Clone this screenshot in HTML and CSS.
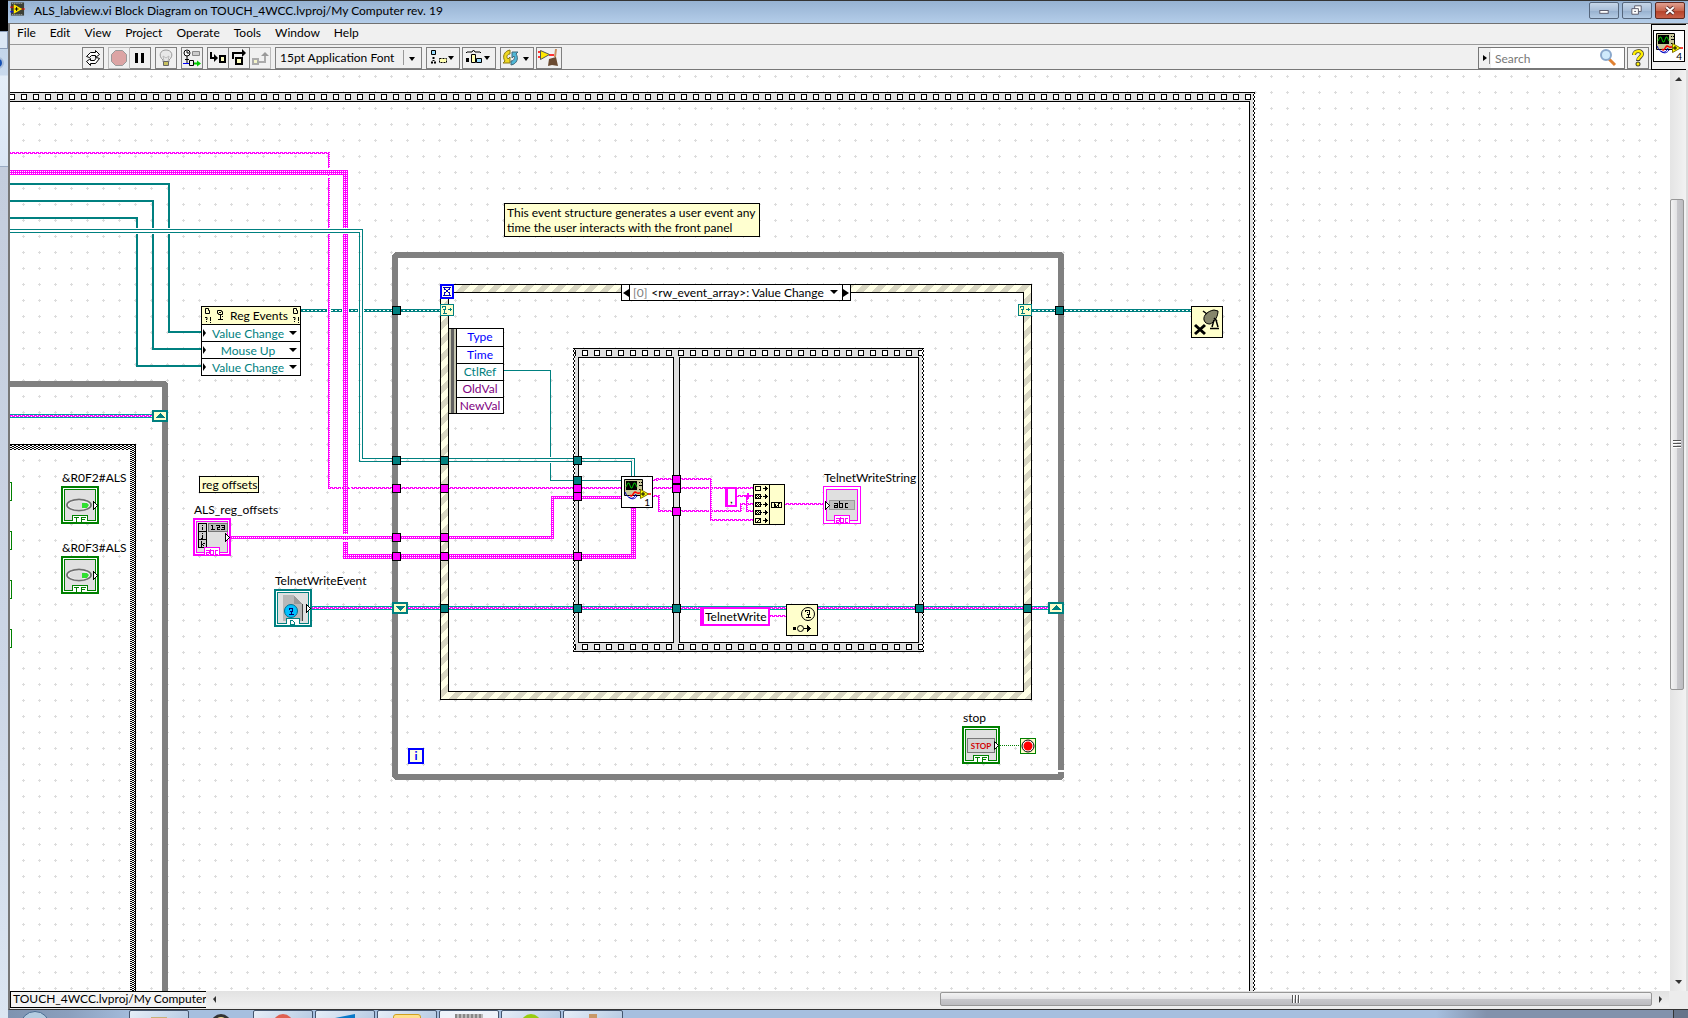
FILE: index.html
```html
<!DOCTYPE html>
<html lang="en">
<head>
    <meta charset="UTF-8" />
    <meta name="viewport" content="width=device-width, initial-scale=1" />
    <title>ALS_labview.vi Block Diagram</title>
    <link rel="stylesheet" href="styles.css">
</head>
<body>

<!-- shared symbols -->
<svg class="defs" width="0" height="0">
    <defs>
        <symbol id="vi-icon" viewBox="0 0 32 32">
            <rect x="0.5" y="0.5" width="31" height="31" fill="#fff" stroke="#000"/>
            <path d="M3.500 3.500h18v16h-18z" fill="#c8c89c" stroke="#000"/>
            <path d="M5 5h11v9H5z" fill="#000"/>
            <path d="M5 11l2-4h1l2 5h1l2-5h1l2 4" fill="none" stroke="#00c000"/>
            <path d="M18 6.500h1M20 6.500h1M18 9.500h3M18 13.500h2" stroke="#000"/>
            <path d="M4 16c3 7 8 9 11 2M8 21c3 3 6 2 8-1" fill="none" stroke="#0000c0"/>
            <path d="M9 19c2 3 3-2 5-3 2 0 2 2 4 1h3M27 18h3" fill="none" stroke="#f00" stroke-width="1.5"/>
            <path d="M19.500 13.500l8 4.500-8 4.500z" fill="#ffff00" stroke="#807000"/>
            <path d="M20 18h4M22 16v4" stroke="#000"/>
        </symbol>
        <symbol id="antenna" viewBox="0 0 10 12">
            <path d="M2.500 1.500h4v1h1v3h-4v-1h-1zM4 3.500h2M5.500 6v4M3 10.500h5M7 7.500h1" fill="none" stroke="currentColor"/>
        </symbol>
        <symbol id="wire-arrow" viewBox="0 0 6 9">
            <path d="M0.500 0.500v8l4-4z" fill="#fff" stroke="#000"/>
        </symbol>
        <symbol id="bool-terminal" viewBox="0 0 38 38">
            <rect x="1" y="1" width="36" height="36" fill="#fff" stroke="#008000" stroke-width="2"/>
            <rect x="3.500" y="3.500" width="31" height="31" fill="#e0e0e0" stroke="#008000"/>
            <rect x="11" y="29" width="16" height="7" fill="#fff"/>
            <path d="M11.500 35v-5.500h15v5.500M13 31.500h5M15.500 31.500v4M20.500 35.500v-4h4M20.500 33.500h3" fill="none" stroke="#008000"/>
        </symbol>
        <symbol id="led" viewBox="0 0 30 14">
            <ellipse cx="14" cy="7" rx="13" ry="6.500" fill="#a8a8a8"/>
            <ellipse cx="14" cy="7" rx="12" ry="5.500" fill="#f0f0f0" stroke="#6c6c6c" stroke-width="1.500"/>
            <ellipse cx="13" cy="7" rx="9" ry="4" fill="#dedede"/>
            <path d="M17 5h5l2 2-2 3h-5z" fill="#30e030"/>
        </symbol>
        <symbol id="abc-tag" viewBox="0 0 16 8">
            <path d="M0.500 8V0.500h15V8" fill="#fff" stroke="#f0f"/>
            <path d="M2 3.500h3v3.500M5 5.500H2v1.500h3M6.500 1.500V7h3V3.500h-3M14 3.500h-3V7h3" fill="none" stroke="#f0f"/>
        </symbol>
    </defs>
</svg>

<aside class="behind">
    <div class="behind-top"></div>
    <div class="behind-tab"></div>
    <div class="behind-bar"><i></i></div>
    <div class="behind-page"></div>
</aside>

<main class="window">
    <header class="titlebar">
        <svg class="app-icon" viewBox="0 0 16 14">
            <rect x="1" y="0" width="14" height="14" fill="#3c4038"/>
            <path d="M2 1h12M2 13h12" stroke="#c8c8c8" stroke-dasharray="1 1"/>
            <path d="M0 5h4" stroke="#f00"/><path d="M0 10h4" stroke="#00f"/><path d="M12 7h4" stroke="#f00"/>
            <path d="M4 2l9 5-9 5z" fill="#ffe800"/>
            <path d="M5 7h4M7 5v4" stroke="#000"/>
        </svg>
        <h1>ALS_labview.vi Block Diagram on TOUCH_4WCC.lvproj/My Computer rev. 19</h1>
        <div class="window-buttons">
            <button aria-label="Minimize"><svg viewBox="0 0 30 15"><rect x="10.500" y="7.500" width="9" height="3" fill="#fff" stroke="#556"/></svg></button>
            <button aria-label="Restore"><svg viewBox="0 0 30 15"><path d="M12.500 2.500h7v6h-7z" fill="#fff" stroke="#556"/><path d="M9.500 5.500h7v6h-7z" fill="#fff" stroke="#556"/><path d="M12 8.500h2" stroke="#556"/></svg></button>
            <button class="close" aria-label="Close"><svg viewBox="0 0 30 15"><path d="M11 4l8 7M19 4l-8 7" stroke="#5a3030" stroke-width="4"/><path d="M11 4l8 7M19 4l-8 7" stroke="#fff" stroke-width="2"/></svg></button>
        </div>
    </header>

    <div class="chrome">
        <div class="bars">
            <nav class="menubar">
                <a href="#">File</a>
                <a href="#">Edit</a>
                <a href="#">View</a>
                <a href="#">Project</a>
                <a href="#">Operate</a>
                <a href="#">Tools</a>
                <a href="#">Window</a>
                <a href="#">Help</a>
            </nav>
            <div class="toolbar">
                <button class="tool" aria-label="Run continuously">
                    <svg viewBox="0 0 20 20"><g fill="#fff" stroke="#000"><path d="M3.500 8.500l4-4h5v-2l4 4-4 3v-2h-4l-2 2z"/><path d="M16.500 10.500l-4 5h-5v2l-4-4 4-3v2h4l2-3z"/></g></svg>
                </button>
                <div class="group">
                    <button class="tool" aria-label="Abort" disabled><svg viewBox="0 0 20 20"><path d="M6.500 2.500h7l4 4v7l-4 4h-7l-4-4v-7z" fill="#dca4a4" stroke="#999"/></svg></button>
                    <button class="tool" aria-label="Pause"><svg viewBox="0 0 20 20"><path d="M5 5h3v10H5zM11 5h3v10h-3z"/></svg></button>
                </div>
                <button class="tool" aria-label="Highlight execution">
                    <svg viewBox="0 0 20 20"><path d="M7 12c-5-4-3-10 3-10s8 6 3 10v2H7z" fill="#e8e8e8" stroke="#999"/><path d="M8 13l-1-5 3 2 3-2-1 5" fill="none" stroke="#bbb"/><path d="M7.500 13.500h5v4h-5z" fill="#c8c060" stroke="#666"/></svg>
                </button>
                <button class="tool" aria-label="Retain wire values">
                    <svg viewBox="0 0 20 20"><circle cx="5" cy="5" r="3" fill="#fff" stroke="#000"/><path d="M5 3v2h2M5 8v7M3 11.500h4" stroke="#000" fill="none"/><path d="M10.500 3.500h7v4h-7z" fill="#ccc" stroke="#888"/><path d="M1 15.500h6" stroke="#00f"/><path d="M7.500 12.500h4v5h-4z" fill="#eee" stroke="#000"/><path d="M12 14.500h3v-2l4 3-4 3v-2h-3z" fill="#0c0"/></svg>
                </button>
                <div class="group">
                    <button class="tool" aria-label="Step into"><svg viewBox="0 0 20 20"><path d="M3 4v6h4" fill="none" stroke="#000" stroke-width="2"/><path d="M6 6l4 4-4 4z"/><path d="M12 8h5v6h-5z" fill="#ffffc0" stroke="#000" stroke-width="2"/></svg></button>
                    <button class="tool" aria-label="Step over"><svg viewBox="0 0 20 20"><path d="M4 11V5h10" fill="none" stroke="#000" stroke-width="2"/><path d="M13 1l4 4-4 4z"/><path d="M7 10h6v6H7z" fill="#ffffc0" stroke="#000" stroke-width="2"/></svg></button>
                    <button class="tool" aria-label="Step out" disabled><svg viewBox="0 0 20 20"><path d="M3 11h5v5H3z" fill="#f4f4c8" stroke="#aaa" stroke-width="2"/><path d="M9 14h6V8" fill="none" stroke="#aaa" stroke-width="2"/><path d="M11 8l4-4 4 4z" fill="#999"/></svg></button>
                </div>
                <div class="font-box">
                    <select aria-label="Text settings"><option>15pt Application Font</option></select>
                </div>
                <div class="pair">
                    <button class="tool wide" aria-label="Align objects">
                        <svg viewBox="0 0 32 20"><path d="M4.500 2.500h4v4h-4z" fill="#9df" stroke="#000"/><path d="M6.500 9v4M4 14.500h6" stroke="#000" stroke-width="2" stroke-dasharray="2 1"/><path d="M12.500 10.500h7v4h-7z" fill="#ffffb0" stroke="#000" stroke-dasharray="2 1"/><path d="M21 8h6l-3 4z"/></svg>
                    </button>
                    <button class="tool wide" aria-label="Distribute objects">
                        <svg viewBox="0 0 32 20"><path d="M3 5l1-1h5l1.500-2 1.500 2h5l1 1" fill="none" stroke="#000"/><path d="M3 10h3v4H3z"/><path d="M8.500 6.500h4v8h-4z" fill="#ffffb0" stroke="#000"/><path d="M13.500 10.500h5v4h-5z" fill="#9df" stroke="#000"/><path d="M21 8h6l-3 4z"/></svg>
                    </button>
                </div>
                <div class="pair">
                    <button class="tool wide" aria-label="Reorder">
                        <svg viewBox="0 0 32 20"><path d="M9 2C3 3 1 9 4 13l-2 2h7V9l-2 2C5 9 6 6 9 6z" fill="#f0d820" stroke="#887818"/><path d="M10 17c6-1 8-7 5-11l2-2h-6v6l2-2c1 2 0 5-3 5z" fill="#50b8d8" stroke="#406878"/><path d="M22 9h6l-3 4z"/></svg>
                    </button>
                    <button class="tool cleanup" aria-label="Clean up diagram">
                        <svg viewBox="0 0 24 20"><path d="M1 4h4M1 9h4M12 7h5" stroke="#f33" stroke-width="2"/><path d="M3.500 2.500l9 4-9 5z" fill="#ffe800" stroke="#555"/><path d="M19 1l-1 8" stroke="#c89060" stroke-width="2"/><path d="M12 11l7-2 2 9-6-1-4 1z" fill="#6a4a30"/></svg>
                    </button>
                </div>
                <div class="pair right">
                    <div class="search">
                        <svg class="search-arrow" viewBox="0 0 12 20"><path d="M4 7l4 3-4 3z"/><path d="M10.500 4v12" stroke="#888"/></svg>
                        <input type="text" aria-label="Search" placeholder="Search">
                        <svg class="search-lens" viewBox="0 0 18 18"><path d="M10 10l6 6" stroke="#e08030" stroke-width="3"/><circle cx="7" cy="6" r="5" fill="#cfeafc" stroke="#8aa8cc" stroke-width="2"/></svg>
                    </div>
                    <button class="tool" aria-label="Context help">
                        <svg viewBox="0 0 20 20"><path d="M6 7c0-5 8-5 8-1 0 3-4 3-4 7" fill="none" stroke="#443" stroke-width="4"/><circle cx="10" cy="16" r="2.500" fill="#443"/><path d="M6 7c0-5 8-5 8-1 0 3-4 3-4 6" fill="none" stroke="#ffee00" stroke-width="2.500"/><circle cx="10" cy="16" r="1.500" fill="#fe0"/></svg>
                    </button>
                </div>
            </div>
        </div>
        <div class="connector">
            <div class="vi-badge"><svg viewBox="0 0 32 32"><use href="#vi-icon"/></svg><span>4</span></div>
        </div>
    </div>

    <div class="workspace">
        <div class="canvas">
            <div class="sheet">
                <svg class="wires" width="1700" height="1200" shape-rendering="crispEdges">
                    <defs>
                        <pattern id="grid" width="16" height="16" patternUnits="userSpaceOnUse">
                            <path d="M6 12h3v1H6zM7 11h1v3H7z" fill="#dcdcdc"/>
                        </pattern>
                        <pattern id="holes" x="9" y="4" width="12" height="6" patternUnits="userSpaceOnUse">
                            <rect x="0.500" y="0.500" width="5" height="5" fill="#fff" stroke="#000"/>
                        </pattern>
                        <pattern id="holes-inner" x="6" y="2" width="12" height="6" patternUnits="userSpaceOnUse">
                            <rect x="0.500" y="0.500" width="5" height="5" fill="#fff" stroke="#000"/>
                        </pattern>
                        <pattern id="stripe" width="16" height="16" patternUnits="userSpaceOnUse">
                            <rect width="16" height="16" fill="#ffffe6"/>
                            <path d="M0 11L11 0h5v3L3 16H0zM0 3V0h3z M11 16h5v-5z" fill="#d8d6c2"/>
                        </pattern>
                        <pattern id="checker" width="4" height="4" patternUnits="userSpaceOnUse">
                            <rect width="4" height="4" fill="#fff"/>
                            <path d="M0 0h2v1H0zM2 1h2v1H2zM0 2h2v1H0zM2 3h2v1H2z"/>
                        </pattern>
                        <pattern id="edge" width="2" height="4" patternUnits="userSpaceOnUse">
                            <rect width="2" height="4" fill="#fff"/>
                            <path d="M0 0h1v2H0zM1 2h1v2H1z"/>
                        </pattern>
                        <pattern id="string" width="4" height="2" patternUnits="userSpaceOnUse">
                            <rect width="4" height="2" fill="#f0f"/>
                            <path d="M3 0h1v1H3zM1 1h1v1H1z" fill="#fff"/>
                        </pattern>
                        <pattern id="array" width="2" height="2" patternUnits="userSpaceOnUse">
                            <rect width="2" height="2" fill="#f0f"/>
                            <path d="M0 1h1v1H0z" fill="#fff"/>
                        </pattern>
                        <g id="t"><rect x="0.500" y="0.500" width="8" height="8" fill="#008080" stroke="#000"/></g>
                        <g id="p"><rect x="0.500" y="0.500" width="8" height="8" fill="#f0f" stroke="#000"/></g>
                        <g id="dyn"><rect x="0.500" y="0.500" width="13" height="11" fill="#ffffcc" stroke="#008080"/><path d="M2 2.500h4M2.500 2v2M5.500 2v3M3 5.500h3M4.500 6v4M3 9.500h4M8 5.500h4M10.500 4v3" fill="none" stroke="#008080"/></g>
                    </defs>

                    <rect x="10" y="70" width="1690" height="1130" fill="url(#grid)"/>

                    <!-- outer flat sequence -->
                    <rect x="10" y="92" width="1245" height="10" fill="#e0e0e0"/>
                    <rect x="10" y="94" width="1245" height="6" fill="url(#holes)"/>
                    <path d="M10 92.500h1245M10 101.500h1240M1249.500 101v1100" stroke="#000"/>
                    <rect x="1250" y="101" width="4" height="1100" fill="#e0e0e0"/>
                    <rect x="1253" y="93" width="2" height="1110" fill="url(#edge)"/>

                    <!-- left loop and case -->
                    <path d="M10 384h155v820" fill="none" stroke="#808080" stroke-width="6" stroke-linejoin="bevel"/>
                    <path d="M10 444h126v760h-6V450H10z" fill="url(#checker)"/>
                    <path d="M10 444.500h125.500v760" fill="none" stroke="#000"/>
                    <path d="M10 482.500h1.500v18H10M10 531.500h1.500v18H10M10 580.500h1.500v18H10M10 629.500h1.500v18H10" fill="none" stroke="#008000"/>

                    <!-- while loop -->
                    <rect x="395" y="255" width="666" height="522" fill="none" stroke="#808080" stroke-width="6" stroke-linejoin="bevel"/>
                    <path d="M1057 771h8" stroke="#fff" stroke-width="2"/>

                    <!-- event structure -->
                    <path d="M440 284h592v416H440zM449 293v398h574V293z" fill="url(#stripe)" fill-rule="evenodd"/>
                    <rect x="440.500" y="284.500" width="591" height="415" fill="none" stroke="#000"/>
                    <rect x="448.500" y="292.500" width="575" height="399" fill="none" stroke="#000"/>

                    <!-- inner flat sequence -->
                    <path d="M573 348h351v304H573zM579 358v284h94V358zM680 358v284h238V358z" fill="#e0e0e0" fill-rule="evenodd"/>
                    <rect x="573" y="350" width="351" height="6" fill="url(#holes-inner)"/>
                    <rect x="573" y="644" width="351" height="6" fill="url(#holes-inner)"/>
                    <rect x="573" y="348" width="2" height="304" fill="url(#edge)"/>
                    <rect x="922" y="348" width="2" height="304" fill="url(#edge)"/>
                    <path d="M573 348.500h351M573 651.500h351M578.500 357.500h95v285h-95zM679.500 357.500h239v285h-239z" fill="none" stroke="#000"/>

                    <!-- teal references -->
                    <g fill="none" stroke="#008080">
                        <path d="M10 184h159v148h32M10 201h143v148h48M10 218h127v148h64" stroke-width="2"/>
                        <path d="M504 370.500h46.500v110H621"/>
                    </g>

                    <!-- string wires -->
                    <g fill="none" stroke="url(#string)" stroke-width="2">
                        <path d="M10 153h319v335h292"/>
                        <path d="M653 480h4v-1h54v41h42M653 488h100M653 496h6v15h82v-7h12M737 496h16M747 496v15h6M785 504h38M770 616h16"/>
                    </g>
                    <path d="M745 496h5M747.500 493v6" stroke="#f0f" stroke-width="2"/>
                    <path d="M709 488h1M713 488h1M709 511h1M713 511h1" stroke="#fff" stroke-width="3"/>
                    <path d="M327 169h4M327 177h4" stroke="#fff" stroke-width="2"/>

                    <path d="M230 537.500h322.500v-40H621" fill="none" stroke="url(#array)" stroke-width="3"/>
                    <path d="M341 485v6M350 485v6" stroke="#fff"/>
                    <path d="M10 172.500h335.500v384h288V508" fill="none" stroke="url(#array)" stroke-width="5"/>
                    <path d="M342 534.500h8M342 540.500h8" stroke="#fff" stroke-width="2"/>
                    <path d="M340 537.500h12" stroke="url(#array)" stroke-width="3"/>

                    <!-- reference array -->
                    <path d="M10 231h350M549 460h4" stroke="#fff" stroke-width="6"/>
                    <path d="M10 229.500h352.500v229H634.500V476M10 232.500h349.500v229H631.500V476" fill="none" stroke="#008080"/>

                    <!-- event registration refnum -->
                    <path d="M301 310.500h140M1032 310.500h159" stroke="#008080" stroke-width="3"/>
                    <path d="M303 310.500h138M1034 310.500h157" stroke="#fff" stroke-dasharray="2 2"/>
                    <path d="M327 310.500h4M342 310.500h7M358 310.500h6" stroke="#fff" stroke-width="5"/>
                    <path d="M329 307v7" stroke="url(#string)" stroke-width="2"/>
                    <path d="M345.500 307v7" stroke="url(#array)" stroke-width="5"/>
                    <path d="M359.500 307v7M362.500 307v7" stroke="#008080"/>

                    <!-- user event wires -->
                    <path d="M312 608h736M10 416h143" stroke="#00a0a0" stroke-width="4"/>
                    <path d="M312 608h736M10 416h143" stroke="url(#string)" stroke-width="2"/>

                    <!-- tunnels -->
                    <use href="#t" x="392" y="306"/><use href="#t" x="1055" y="306"/>
                    <use href="#t" x="392" y="456"/><use href="#t" x="440" y="456"/><use href="#t" x="573" y="456"/>
                    <use href="#t" x="573" y="476"/>
                    <use href="#p" x="392" y="484"/><use href="#p" x="440" y="484"/><use href="#p" x="573" y="484"/>
                    <use href="#p" x="573" y="492"/>
                    <use href="#p" x="392" y="533"/><use href="#p" x="440" y="533"/>
                    <use href="#p" x="392" y="552"/><use href="#p" x="440" y="552"/><use href="#p" x="573" y="552"/>
                    <use href="#p" x="672" y="475"/><use href="#p" x="672" y="484"/><use href="#p" x="672" y="507"/>
                    <use href="#t" x="440" y="604"/><use href="#t" x="573" y="604"/><use href="#t" x="672" y="604"/>
                    <use href="#t" x="915" y="604"/><use href="#t" x="1023" y="604"/>

                    <!-- shift registers -->
                    <g fill="#ffffcc" stroke="#008080" stroke-width="2">
                        <rect x="153" y="411" width="14" height="10"/>
                        <rect x="393" y="603" width="14" height="10"/>
                        <rect x="1049" y="603" width="14" height="10"/>
                    </g>
                    <path d="M155 418l5-5 5 5zM395 606l5 5 5-5zM1051 610l5-5 5 5z" fill="#008080"/>

                    <!-- timeout and dynamic terminals -->
                    <rect x="441" y="285" width="12" height="13" fill="#ffffe6" stroke="#00f" stroke-width="2"/>
                    <path d="M443 287.500h8M443 295.500h8M444.500 287v2l5 4v3M449.500 287v2l-5 4v3" fill="none" stroke="#0000c0"/>
                    <use href="#dyn" x="440" y="304"/><use href="#dyn" x="1018" y="304"/>

                    <!-- iteration and stop condition -->
                    <rect x="409" y="749" width="14" height="14" fill="#ffffe6" stroke="#00f" stroke-width="2"/>
                    <path d="M1000 745.500h20" stroke="#008000" stroke-dasharray="1 1"/>
                    <rect x="1020.500" y="738.500" width="15" height="15" fill="#ffffcc" stroke="#008000"/>
                    <g shape-rendering="auto"><circle cx="1028" cy="746" r="6" fill="#fff" stroke="#000"/><circle cx="1028" cy="746" r="4.500" fill="#f00"/></g>

                    <!-- boolean terminals -->
                    <svg x="61" y="486" width="38" height="38"><use href="#bool-terminal"/></svg>
                    <svg x="61" y="556" width="38" height="38"><use href="#bool-terminal"/></svg>
                    <svg x="962" y="726" width="38" height="38"><use href="#bool-terminal"/></svg>
                    <svg x="65" y="498" width="30" height="14" shape-rendering="auto"><use href="#led"/></svg>
                    <svg x="65" y="568" width="30" height="14" shape-rendering="auto"><use href="#led"/></svg>
                    <svg x="93" y="501" width="6" height="9"><use href="#wire-arrow"/></svg>
                    <svg x="93" y="571" width="6" height="9"><use href="#wire-arrow"/></svg>

                    <!-- ALS_reg_offsets -->
                    <rect x="194" y="519" width="36" height="36" fill="#fff" stroke="#f0f" stroke-width="2"/>
                    <rect x="196.500" y="521.500" width="31" height="31" fill="#e0e0e0" stroke="#f0f"/>
                    <path d="M198.500 523.500h8v24h-8zM198.500 531.500h8M198.500 539.500h8" fill="#ccc" stroke="#000"/>
                    <path d="M202.500 525v1M202.500 527v3M202.500 533v1M202.500 535v3h-2M201.500 541v6M204.500 543l-2 1.500 2 2" fill="none" stroke="#000"/>
                    <path d="M208.500 523.500h19v8h-19z" fill="#bbb" stroke="#777"/>
                    <path d="M211 525.500h1.500v4M211 529.500h4M216 525.500h3v2h-2v2h3M221 525.500h3v4h-3M222 527.500h2" fill="none" stroke="#000"/>
                    <svg x="204" y="547" width="16" height="8"><use href="#abc-tag"/></svg>
                    <svg x="225" y="533" width="6" height="9"><use href="#wire-arrow"/></svg>

                    <!-- TelnetWriteEvent -->
                    <rect x="275" y="590" width="36" height="36" fill="#fff" stroke="#008080" stroke-width="2"/>
                    <rect x="277.500" y="592.500" width="31" height="31" fill="#e0e0e0" stroke="#008080"/>
                    <path d="M283 595h11v9h9v17h-20z" fill="#b8b8b8"/>
                    <path d="M294 596l8 8h-8z" fill="#999"/><path d="M302.500 604v17" stroke="#444"/>
                    <circle cx="291" cy="611" r="6.500" fill="#00c0ff" stroke="#007090" shape-rendering="auto"/>
                    <path d="M289 608h4M289.500 608v2M292.500 608v3h-3M291.500 611v3M289 614.500h5" fill="none" stroke="#00006a"/>
                    <path d="M286 619h14v6h-14z" fill="#fff"/>
                    <path d="M286.500 624v-5.500h13v5.500M290.500 620.500h2l2 2v1.500h-4z" fill="none" stroke="#008080"/>
                    <svg x="306" y="604" width="6" height="9"><use href="#wire-arrow"/></svg>

                    <!-- TelnetWriteString -->
                    <rect x="823.500" y="486.500" width="37" height="37" fill="#fff" stroke="#f0f"/>
                    <rect x="826.500" y="489.500" width="31" height="31" fill="#e0e0e0" stroke="#f0f"/>
                    <rect x="829.500" y="500.500" width="25" height="9" fill="#c0c0c0" stroke="#999"/>
                    <path d="M834 503.500h3v4h-3v-2h3M839.500 501v6.500h3v-4h-3M848 503.500h-3v4h3" fill="none" stroke="#000"/>
                    <svg x="834" y="515" width="16" height="8"><use href="#abc-tag"/></svg>
                    <svg x="825" y="501" width="6" height="9"><use href="#wire-arrow"/></svg>

                    <!-- concatenate strings -->
                    <path d="M753.500 484.500h31v40h-31zM769.500 484v40" fill="#ffffcc" stroke="#000"/>
                    <g fill="none" stroke="#000">
                        <path d="M755.500 486.500h5v4h-5zM755.500 494.500h5v4h-5zM755.500 502.500h5v4h-5zM755.500 510.500h5v4h-5zM755.500 518.500h5v4h-5z"/>
                        <path d="M756 495.500h5M757 496.500h5M756 497.500h5M756 503.500h5M757 504.500h5M756 505.500h5M756 511.500h5M757 512.500h5M756 513.500h5" stroke-dasharray="1 1"/>
                        <path d="M757 522l3-3"/>
                        <path d="M763 488.500h5M763 496.500h5M763 504.500h5M763 512.500h5M763 520.500h5"/>
                        <path d="M766.500 487v3M766.500 495v3M766.500 503v3M766.500 511v3M766.500 519v3"/>
                        <path d="M765.500 486v5M765.500 494v5M765.500 502v5M765.500 510v5M765.500 518v5"/>
                        <path d="M771.500 502.500h10v5h-10zM774.500 503v5M776 507l4-4M778.500 503v5M775.500 504v3"/>
                    </g>
                    <!-- comma constant -->
                    <rect x="726" y="488" width="10" height="18" fill="#fff" stroke="#f0f" stroke-width="2"/>
                    <path d="M726.500 487v20" stroke="#f0f" stroke-width="3"/>

                    <!-- unregister for events -->
                    <rect x="1191.500" y="306.500" width="31" height="31" fill="#ffffcc" stroke="#000"/>
                    <g shape-rendering="auto">
                        <path d="M1204 320c-1-5 4-9 10-10l4 1c0 5-3 11-8 13-3 0-5-1-6-4z" fill="#86866c" stroke="#000"/>
                        <path d="M1203 311l4 3M1214 318l3 3M1214 320l-2 7M1216 320l2 7M1210 328.500h9" stroke="#000" stroke-width="1.500" fill="none"/>
                        <path d="M1195 325l10 9M1205 325l-10 9" stroke="#000" stroke-width="3"/>
                    </g>

                    <!-- generate user event -->
                    <rect x="786.500" y="604.500" width="31" height="31" fill="#ffffcc" stroke="#000"/>
                    <g fill="none" stroke="#000">
                        <circle cx="808" cy="614" r="6.500" shape-rendering="auto"/>
                        <path d="M806 610.500h4M805.500 610v2M809.500 611v3h-3M807 612.500h1M808.500 614v4M806 617.500h5M793 628.500h3M803 628.500h5"/>
                        <path d="M793 627h3v3h-3zM807 625v7l4-3.500z" fill="#000" stroke="none"/>
                        <circle cx="800.500" cy="628.500" r="3" fill="#ffffcc" shape-rendering="auto"/>
                    </g>
                </svg>

                <p class="comment event-note">This event structure generates a user event any<br>time the user interacts with the front panel</p>
                <p class="comment reg-note">reg offsets</p>

                <span class="label rof2">&amp;R0F2#ALS</span>
                <span class="label rof3">&amp;R0F3#ALS</span>
                <span class="label reg-label">ALS_reg_offsets</span>
                <span class="label event-label">TelnetWriteEvent</span>
                <span class="label string-label">TelnetWriteString</span>
                <label class="label stop-label" for="stop">stop</label>
                <button class="stop" id="stop">STOP</button>
                <svg class="stop-arrow" viewBox="0 0 6 9"><use href="#wire-arrow"/></svg>
                <span class="iteration">i</span>
                <span class="comma">,</span>
                <input class="string-const" type="text" aria-label="Event name" value="TelnetWrite">

                <section class="reg-events">
                    <h2>
                        <svg viewBox="0 0 98 17"><path d="M3.500 1.500h3v2h1v3h-4zM91.500 1.500h3v2h1v3h-4zM3 10.500h2v2h-1M8.500 10v4M4.500 14v1M8.500 15v1M91 10.500h2v2h-1M96.500 10v4M92.500 14v1M96.500 15v1" fill="none" stroke="#000"/><svg x="13" y="2" width="10" height="12"><use href="#antenna"/></svg></svg>
                        <span>Reg Events</span>
                    </h2>
                    <div class="event-row"><select aria-label="Event 1"><option>Value Change</option></select></div>
                    <div class="event-row"><select aria-label="Event 2"><option>Mouse Up</option></select></div>
                    <div class="event-row"><select aria-label="Event 3"><option>Value Change</option></select></div>
                </section>

                <ul class="event-data">
                    <li class="blue">Type</li>
                    <li class="blue">Time</li>
                    <li class="teal">CtlRef</li>
                    <li class="purple">OldVal</li>
                    <li class="purple">NewVal</li>
                </ul>

                <div class="case-selector">
                    <button aria-label="Previous case"><svg viewBox="0 0 7 14"><path d="M7 3v8L1 7z"/></svg></button>
                    <div class="case-name"><span>[0]</span><select aria-label="Event case"><option>&lt;rw_event_array&gt;: Value Change</option></select></div>
                    <button aria-label="Next case"><svg viewBox="0 0 7 14"><path d="M0 3v8l6-4z"/></svg></button>
                </div>

                <div class="vi-badge sub-vi"><svg viewBox="0 0 32 32"><use href="#vi-icon"/></svg><span>1</span></div>
            </div>
        </div>
        <div class="vscroll">
            <button aria-label="Scroll up"><svg viewBox="0 0 9 5"><path d="M1 5h7L5 1z" fill="#333"/></svg></button>
            <div class="vtrack"><div class="thumb vthumb"><i></i><i></i><i></i></div></div>
            <button aria-label="Scroll down"><svg viewBox="0 0 9 5"><path d="M1 0h7L5 4z" fill="#333"/></svg></button>
        </div>
    </div>

    <footer class="statusbar">
        <a class="target" href="#">TOUCH_4WCC.lvproj/My Computer</a>
        <div class="hscroll">
            <button aria-label="Scroll left"><svg viewBox="0 0 5 9"><path d="M4 1v7L1 4z" fill="#333"/></svg></button>
            <div class="htrack"><div class="thumb hthumb"><i></i><i></i><i></i></div></div>
            <button aria-label="Scroll right"><svg viewBox="0 0 5 9"><path d="M1 1v7l3-4z" fill="#333"/></svg></button>
        </div>
    </footer>

    <div class="taskbar">
        <span class="orb"></span>
        <button class="task" aria-label="Files"><i class="tan"></i></button>
        <button class="task plain" aria-label="Clock"><i class="ring"></i></button>
        <button class="task" aria-label="Browser"><i class="red"></i></button>
        <button class="task" aria-label="Outlook"><i class="blue-flag"></i></button>
        <button class="task" aria-label="Explorer"><i class="folder"></i></button>
        <button class="task active" aria-label="LabVIEW"><i class="film"></i></button>
        <button class="task" aria-label="Messenger"><i class="green"></i></button>
        <button class="task" aria-label="Paint"><i class="brush"></i></button>
        <span class="tray"></span>
    </div>
</main>

</body>
</html>
```
FILE: styles.css
```css
* {
    box-sizing: border-box;
}
body {
    margin: 0;
    height: 100vh;
    display: flex;
    overflow: hidden;
    background: #f0f0f0;
    color: #000;
    font-family: Lato, 'Open Sans', sans-serif;
    font-size: 12px;
    line-height: 15px;
}
button, select, input {
    font: inherit;
    color: inherit;
    margin: 0;
    padding: 0;
    border: 0;
    background: none;
    border-radius: 0;
}
select {
    appearance: none;
}
a {
    color: inherit;
    text-decoration: none;
}
svg {
    display: block;
}
.defs {
    position: absolute;
}

/* slice of the window behind */
.behind {
    width: 8px;
    display: flex;
    flex-direction: column;
}
.behind-top {
    height: 31px;
    background: #000;
}
.behind-tab {
    height: 18px;
    background: #dbe7f5;
    border: 1px solid #8a9cb8;
    border-left: 0;
}
.behind-bar {
    height: 118px;
    padding-top: 8px;
    overflow: hidden;
    background: linear-gradient(#c4d6ea 0, #c9daee 26px, #e4eef9 27px, #dbe6f5);
    border-bottom: 1px solid #9aabc4;
}
.behind-bar i {
    display: block;
    width: 12px;
    height: 12px;
    margin-left: -8px;
    border: 2px solid #a8bcd8;
    border-radius: 50%;
    background: #1450b4;
}
.behind-page {
    flex: 1;
    background: linear-gradient(#c4cddd, #ccd6e6 60%, #dce6f2);
}

/* main window */
.window {
    flex: 1;
    min-width: 0;
    display: flex;
    flex-direction: column;
}
.titlebar {
    height: 24px;
    display: flex;
    align-items: flex-start;
    gap: 9px;
    padding-left: 2px;
    border-top: 1px solid #333;
    border-bottom: 1px solid #707070;
    background: linear-gradient(#96b2d2, #b4cde9);
}
.titlebar h1 {
    flex: 1;
    margin: 2px 0 0;
    font-size: 12px;
    font-weight: 400;
    line-height: 15px;
}
.app-icon {
    width: 15px;
    height: 14px;
    margin-top: 1px;
}
.window-buttons {
    display: flex;
    gap: 3px;
    padding: 1px 3px 0 0;
}
.window-buttons button {
    width: 30px;
    height: 17px;
    border: 1px solid #55667c;
    border-radius: 2px;
    background: linear-gradient(#c6d6e8, #a8bed8 50%, #96b0ce 51%, #b4cbe4);
}
.window-buttons .close {
    border-color: #5c2820;
    background: linear-gradient(#e0a090, #c86850 50%, #b44028 51%, #c86048);
}
.window-buttons svg {
    width: 28px;
    height: 15px;
}
.chrome {
    display: flex;
    padding-right: 2px;
    border-left: 2px solid #777;
}
.bars {
    flex: 1;
}
.menubar {
    height: 21px;
    display: flex;
    gap: 14px;
    padding: 1px 0 0 7px;
    border-bottom: 1px solid #999;
}
.toolbar {
    height: 25px;
    display: flex;
    gap: 4px;
    padding: 2px 2px 0 72px;
    border-bottom: 1px solid #777;
}
.group, .pair {
    display: flex;
}
.pair {
    gap: 2px;
}
.pair.right {
    margin-left: auto;
}
.tool {
    width: 22px;
    height: 22px;
    border: 1px solid #808080;
}
.tool svg {
    width: 20px;
    height: 20px;
}
.tool:disabled {
    border-color: #bbb;
}
.group .tool + .tool {
    width: 21px;
    border-left: 0;
}
.tool.wide {
    width: 34px;
}
.tool.wide svg {
    width: 32px;
}
.tool.cleanup {
    width: 26px;
}
.tool.cleanup svg {
    width: 24px;
}
.font-box {
    position: relative;
    width: 147px;
    height: 22px;
    border: 1px solid #808080;
}
.font-box select {
    display: block;
    width: 100%;
    height: 18px;
    padding-left: 4px;
}
.font-box::before {
    content: "";
    position: absolute;
    right: 17px;
    top: 2px;
    height: 15px;
    border-left: 1px solid #999;
}
.font-box::after {
    content: "";
    position: absolute;
    right: 6px;
    top: 9px;
    border: 3px solid transparent;
    border-top: 4px solid #000;
}
.search {
    width: 147px;
    height: 22px;
    display: flex;
    align-items: center;
    border: 1px solid #777;
    background: #fff;
}
.search input {
    flex: 1;
    min-width: 0;
    padding-left: 4px;
    outline: 0;
}
.search input::placeholder {
    color: #777;
}
.search-arrow {
    width: 12px;
    height: 20px;
    background: #f0f0f0;
}
.search-lens {
    width: 18px;
    height: 18px;
    margin-right: 7px;
}
.connector {
    width: 35px;
    padding: 5px 0 0 1px;
    border: 1px solid #000;
    border-width: 1px 0 1px 1px;
}
.vi-badge {
    position: relative;
    width: 32px;
    height: 32px;
}
.vi-badge svg {
    width: 32px;
    height: 32px;
}
.vi-badge span {
    position: absolute;
    right: 3px;
    bottom: 0;
    font-size: 10px;
    line-height: 12px;
}

/* diagram */
.workspace {
    flex: 1;
    min-height: 0;
    display: flex;
    border-left: 2px solid #777;
}
.canvas {
    position: relative;
    flex: 1;
    overflow: hidden;
    background: #fff;
}
/* the sheet is scrolled under the canvas */
.sheet {
    position: absolute;
    left: -10px;
    top: -70px;
    width: 1700px;
    height: 1200px;
}
.label, .comment, .iteration, .comma, .stop, .stop-arrow, .string-const,
.reg-events, .event-data, .case-selector, .sub-vi {
    position: absolute;
    white-space: nowrap;
}
.comment {
    margin: 0;
    padding: 1px 2px;
    border: 1px solid #000;
    background: #ffffd0;
}
.event-note {
    left: 504px;
    top: 203px;
    width: 256px;
}
.reg-note {
    left: 199px;
    top: 476px;
    width: 60px;
    height: 17px;
    padding: 0 2px;
}
.rof2 {
    left: 62px;
    top: 470px;
}
.rof3 {
    left: 62px;
    top: 540px;
}
.reg-label {
    left: 194px;
    top: 502px;
}
.event-label {
    left: 275px;
    top: 573px;
}
.string-label {
    left: 824px;
    top: 470px;
}
.stop-label {
    left: 963px;
    top: 710px;
}
.stop {
    left: 967px;
    top: 738px;
    width: 28px;
    height: 15px;
    border: 1px solid #777;
    background: #d4d4d4;
    color: #d00000;
    font-size: 8px;
    font-weight: 700;
    line-height: 12px;
}
.stop-arrow {
    left: 994px;
    top: 741px;
    width: 6px;
    height: 9px;
}
.iteration {
    left: 408px;
    top: 748px;
    width: 16px;
    text-align: center;
    color: #00f;
    font-weight: 700;
}
.comma {
    left: 730px;
    top: 491px;
}
.string-const {
    left: 700px;
    top: 607px;
    width: 70px;
    height: 19px;
    padding: 0 1px;
    border: 2px solid #f0f;
    border-left-width: 4px;
    background: #fff;
}
.reg-events {
    left: 201px;
    top: 306px;
    width: 100px;
    border: 1px solid #000;
    background: #fff;
    color: #008080;
}
.reg-events h2 {
    position: relative;
    margin: 0;
    height: 17px;
    background: #ffffcc;
    color: #000;
    font-size: 12px;
    font-weight: 400;
    line-height: 17px;
}
.reg-events h2 span {
    position: absolute;
    left: 28px;
    top: 0;
}
.event-row {
    position: relative;
    height: 17px;
    border-top: 1px solid #000;
}
.event-row select {
    display: block;
    width: 92px;
    height: 16px;
    text-align-last: center;
}
.event-row::before {
    content: "";
    position: absolute;
    left: 1px;
    top: 4px;
    border: 4px solid transparent;
    border-left: 3px solid #000;
    border-right: 0;
}
.event-row::after {
    content: "";
    position: absolute;
    right: 3px;
    top: 6px;
    border: 4px solid transparent;
    border-top-color: #000;
    border-bottom: 0;
}
.event-data {
    left: 449px;
    top: 328px;
    width: 55px;
    margin: 0;
    padding: 0;
    list-style: none;
    border: 1px solid #000;
    border-left: 0;
    background: linear-gradient(to right, #c4c4b0 2px, #606060 2px, #606060 5px, #c4c4b0 5px);
}
.event-data li {
    height: 17px;
    margin-left: 7px;
    border-left: 1px solid #000;
    background: #fff;
    text-align: center;
    line-height: 16px;
}
.event-data li:last-child {
    height: 16px;
}
.event-data li + li {
    border-top: 1px solid #000;
    line-height: 15px;
}
.blue {
    color: #0000ff;
}
.teal {
    color: #008080;
}
.purple {
    color: #800080;
}
.case-selector {
    left: 621px;
    top: 284px;
    width: 230px;
    height: 17px;
    display: flex;
    border: 1px solid #000;
    background: #fff;
}
.case-selector button {
    width: 7px;
    height: 15px;
}
.case-selector button svg {
    width: 7px;
    height: 14px;
}
.case-name {
    position: relative;
    flex: 1;
    display: flex;
    gap: 4px;
    padding-left: 3px;
    border: 1px solid #000;
    border-width: 0 1px;
}
.case-name span {
    color: #808080;
}
.case-name select {
    flex: 1;
    min-width: 0;
}
.case-name::after {
    content: "";
    position: absolute;
    right: 4px;
    top: 5px;
    border: 4px solid transparent;
    border-top-color: #000;
    border-bottom: 0;
}
.sub-vi {
    left: 621px;
    top: 476px;
}

/* scrollbars */
.vscroll {
    width: 18px;
    display: flex;
    flex-direction: column;
    border-right: 2px solid #dcdcdc;
    background: linear-gradient(to right, #e4e4e4, #f2f2f2);
}
.vscroll button {
    height: 17px;
}
.vscroll button svg {
    width: 9px;
    height: 5px;
    margin: 0 auto;
}
.vtrack {
    flex: 1;
    display: flex;
    flex-direction: column;
}
.vtrack::before {
    content: "";
    flex: 112;
}
.vtrack::after {
    content: "";
    flex: 285;
}
.thumb {
    display: flex;
    align-items: center;
    justify-content: center;
    gap: 1px;
    border: 1px solid #979797;
    border-radius: 2px;
    background: linear-gradient(#f3f3f3, #e2e2e4 50%, #c8c8cc 51%, #bcbcc0);
}
.thumb i {
    width: 2px;
    height: 8px;
    background: linear-gradient(to right, #555 50%, #fff 50%);
}
.vthumb {
    flex: 490;
    flex-direction: column;
    margin-right: 2px;
    background: linear-gradient(to right, #f3f3f3, #e2e2e4 50%, #c8c8cc 51%, #bcbcc0);
}
.vthumb i {
    width: 8px;
    height: 2px;
    background: linear-gradient(#555 50%, #fff 50%);
}
.statusbar {
    height: 19px;
    display: flex;
    padding: 0 19px 2px 0;
    border-left: 2px solid #777;
    border-bottom: 1px solid #333;
    background: #ececec;
}
.target {
    width: 196px;
    height: 17px;
    padding: 0 2px;
    border: 1px solid #000;
    border-right: 0;
    background: #f4f4f4;
    line-height: 14px;
    white-space: nowrap;
}
.hscroll {
    flex: 1;
    display: flex;
    background: linear-gradient(#e2e2e2, #f0f0f0);
}
.hscroll button {
    width: 17px;
}
.hscroll button svg {
    width: 5px;
    height: 9px;
    margin: 0 auto;
}
.htrack {
    flex: 1;
    display: flex;
}
.htrack::before {
    content: "";
    flex: 718;
}
.hthumb {
    flex: 711;
    margin: 1px 0;
}

/* top edge of the taskbar */
.taskbar {
    height: 8px;
    display: flex;
    gap: 2px;
    overflow: hidden;
    background: linear-gradient(to right, #7f93b0, #8a9fbd 60px, #a6bfdf 130px, #a6bfdf 85%, #8292ac 88%);
}
.orb {
    width: 30px;
    height: 30px;
    margin: 1px 77px 0 12px;
    border: 1px solid #4a6c92;
    border-radius: 50%;
    background: #b4cce0;
}
.task {
    width: 60px;
    height: 20px;
    border: 1px solid #45566e;
    border-radius: 2px;
    background: linear-gradient(135deg, #e6eef8, #b0c6e0);
}
.task.plain {
    border-color: transparent;
    background: none;
}
.task.active {
    background: #eef3fa;
}
.task i {
    display: block;
    width: 20px;
    height: 20px;
    margin: 3px auto 0;
}
.task .tan {
    width: 16px;
    margin-top: 6px;
    background: #c8b078;
}
.task .ring {
    border: 3px solid #333;
    border-radius: 50%;
    background: #f0dc90;
}
.task .red {
    border-radius: 50%;
    background: #e06050;
}
.task .blue-flag {
    background: #0878c8;
    clip-path: polygon(0 20%, 100% 0, 100% 100%, 0 100%);
}
.task .folder {
    width: 28px;
    border: 1px solid #d0a020;
    border-radius: 3px;
    background: #ffe08c;
}
.task .film {
    width: 28px;
    background: repeating-linear-gradient(to right, #888 0, #888 2px, #bbb 2px, #bbb 4px);
}
.task .green {
    border-radius: 50%;
    background: #98cc10;
}
.task .brush {
    width: 8px;
    background: #c89868;
}
.tray {
    width: 15px;
    margin-left: auto;
    border-left: 1px solid #333;
    background: #66748a;
}
```
